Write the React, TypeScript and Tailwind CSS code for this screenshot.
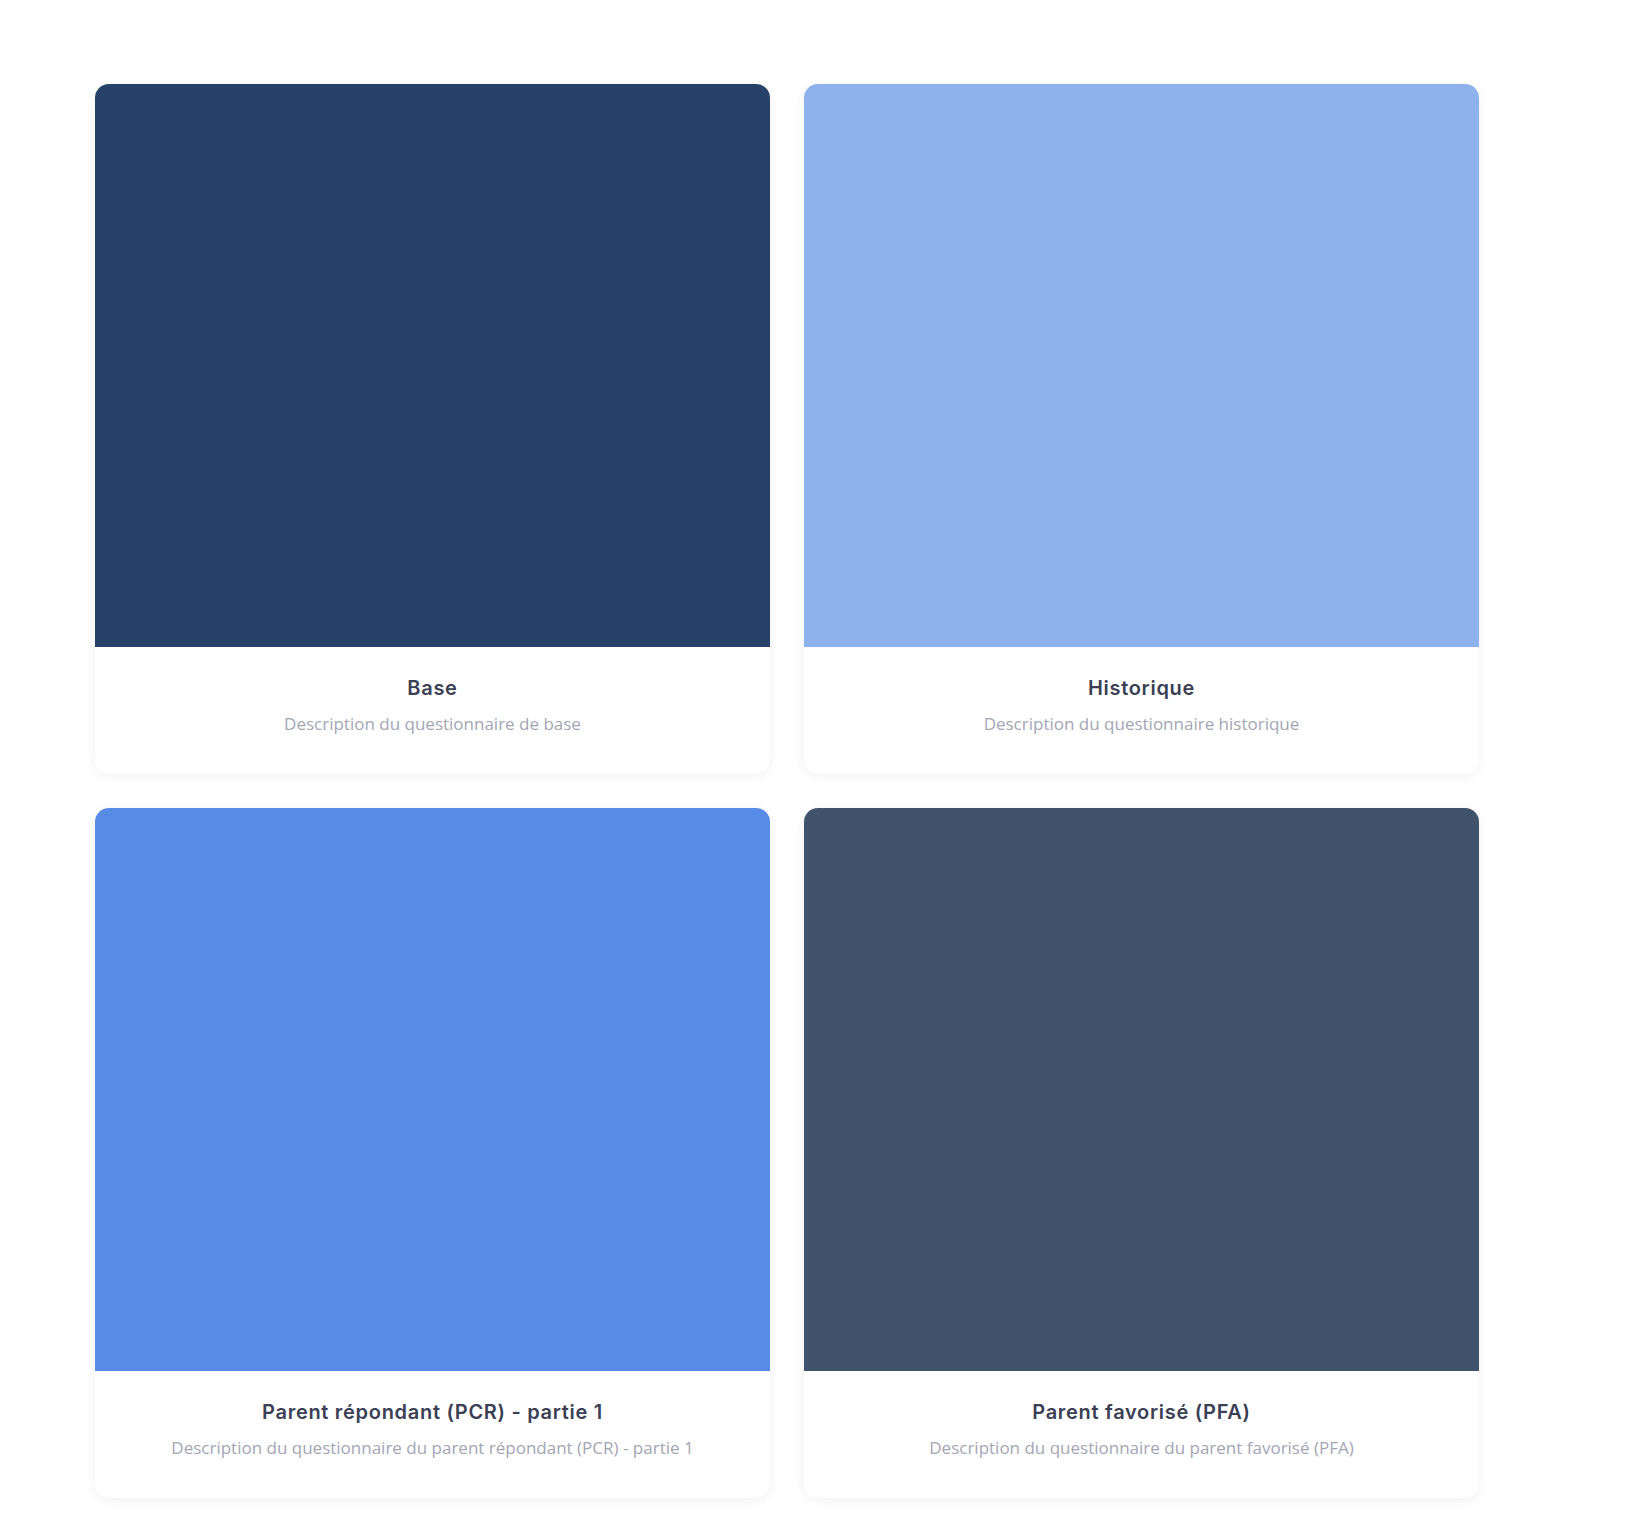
import React from "react";

const cards = [
  { title: "Base", desc: "Description du questionnaire de base", color: "bg-[#274168]" },
  { title: "Historique", desc: "Description du questionnaire historique", color: "bg-[#8eb2eb]" },
  { title: "Parent répondant (PCR) - partie 1", desc: "Description du questionnaire du parent répondant (PCR) - partie 1", color: "bg-[#578be5]" },
  { title: "Parent favorisé (PFA)", desc: "Description du questionnaire du parent favorisé (PFA)", color: "bg-[#41536b]" },
];

export default function App() {
  return (
    <div className="min-h-[1521px] w-full bg-white pl-[95px] pt-[84px]">
      <div className="grid grid-cols-[675px_675px] gap-x-[34px] gap-y-[34px]">
        {cards.map((c) => (
          <div
            key={c.title}
            className="overflow-hidden rounded-[14px] bg-white shadow-[0_2px_12px_rgba(0,0,0,0.06)]"
          >
            <div className={`${c.color} h-[563px] w-full`} />
            <div className="flex flex-col items-center pt-[27px] pb-[38px]">
              <div
                className="text-[20px] leading-[28px] font-semibold tracking-[0.7px] text-[#3b4054]"
                style={{ fontFamily: "Inter, 'Open Sans', sans-serif" }}
              >
                {c.title}
              </div>
              <div
                className="mt-[10px] text-[17px] leading-[24px] text-[#a4a6b4]"
                style={{ fontFamily: "'Open Sans', 'Noto Sans', sans-serif" }}
              >
                {c.desc}
              </div>
            </div>
          </div>
        ))}
      </div>
    </div>
  );
}
